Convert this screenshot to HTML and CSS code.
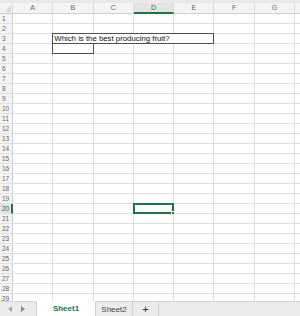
FILE: index.html
```html
<!DOCTYPE html>
<html lang="en">

<head>
    <meta charset="UTF-8">
    <title>Sheet1</title>
    <link rel="stylesheet" href="styles.css">
</head>

<body>
    <div class="topbar"></div>
    <div class="sheet">
        <!-- 列标题 -->
        <div class="colhead corner"><span class="corner-tri"></span></div>
        <div class="colhead">A</div>
        <div class="colhead">B</div>
        <div class="colhead">C</div>
        <div class="colhead active">D</div>
        <div class="colhead">E</div>
        <div class="colhead">F</div>
        <div class="colhead">G</div>
        <div class="colhead"></div>

        <div class="rowhead">1</div><div class="cell"></div><div class="cell"></div><div class="cell"></div><div class="cell"></div><div class="cell"></div><div class="cell"></div><div class="cell"></div><div class="cell"></div>
        <div class="rowhead">2</div><div class="cell"></div><div class="cell"></div><div class="cell"></div><div class="cell"></div><div class="cell"></div><div class="cell"></div><div class="cell"></div><div class="cell"></div>
        <div class="rowhead">3</div><div class="cell"></div><div class="cell question">Which is the best producing fruit?</div><div class="cell"></div><div class="cell"></div><div class="cell"></div>
        <div class="rowhead">4</div><div class="cell"></div><div class="cell answer"></div><div class="cell"></div><div class="cell"></div><div class="cell"></div><div class="cell"></div><div class="cell"></div><div class="cell"></div>
        <div class="rowhead">5</div><div class="cell"></div><div class="cell"></div><div class="cell"></div><div class="cell"></div><div class="cell"></div><div class="cell"></div><div class="cell"></div><div class="cell"></div>
        <div class="rowhead">6</div><div class="cell"></div><div class="cell"></div><div class="cell"></div><div class="cell"></div><div class="cell"></div><div class="cell"></div><div class="cell"></div><div class="cell"></div>
        <div class="rowhead">7</div><div class="cell"></div><div class="cell"></div><div class="cell"></div><div class="cell"></div><div class="cell"></div><div class="cell"></div><div class="cell"></div><div class="cell"></div>
        <div class="rowhead">8</div><div class="cell"></div><div class="cell"></div><div class="cell"></div><div class="cell"></div><div class="cell"></div><div class="cell"></div><div class="cell"></div><div class="cell"></div>
        <div class="rowhead">9</div><div class="cell"></div><div class="cell"></div><div class="cell"></div><div class="cell"></div><div class="cell"></div><div class="cell"></div><div class="cell"></div><div class="cell"></div>
        <div class="rowhead">10</div><div class="cell"></div><div class="cell"></div><div class="cell"></div><div class="cell"></div><div class="cell"></div><div class="cell"></div><div class="cell"></div><div class="cell"></div>
        <div class="rowhead">11</div><div class="cell"></div><div class="cell"></div><div class="cell"></div><div class="cell"></div><div class="cell"></div><div class="cell"></div><div class="cell"></div><div class="cell"></div>
        <div class="rowhead">12</div><div class="cell"></div><div class="cell"></div><div class="cell"></div><div class="cell"></div><div class="cell"></div><div class="cell"></div><div class="cell"></div><div class="cell"></div>
        <div class="rowhead">13</div><div class="cell"></div><div class="cell"></div><div class="cell"></div><div class="cell"></div><div class="cell"></div><div class="cell"></div><div class="cell"></div><div class="cell"></div>
        <div class="rowhead">14</div><div class="cell"></div><div class="cell"></div><div class="cell"></div><div class="cell"></div><div class="cell"></div><div class="cell"></div><div class="cell"></div><div class="cell"></div>
        <div class="rowhead">15</div><div class="cell"></div><div class="cell"></div><div class="cell"></div><div class="cell"></div><div class="cell"></div><div class="cell"></div><div class="cell"></div><div class="cell"></div>
        <div class="rowhead">16</div><div class="cell"></div><div class="cell"></div><div class="cell"></div><div class="cell"></div><div class="cell"></div><div class="cell"></div><div class="cell"></div><div class="cell"></div>
        <div class="rowhead">17</div><div class="cell"></div><div class="cell"></div><div class="cell"></div><div class="cell"></div><div class="cell"></div><div class="cell"></div><div class="cell"></div><div class="cell"></div>
        <div class="rowhead">18</div><div class="cell"></div><div class="cell"></div><div class="cell"></div><div class="cell"></div><div class="cell"></div><div class="cell"></div><div class="cell"></div><div class="cell"></div>
        <div class="rowhead">19</div><div class="cell"></div><div class="cell"></div><div class="cell"></div><div class="cell"></div><div class="cell"></div><div class="cell"></div><div class="cell"></div><div class="cell"></div>
        <div class="rowhead active">20</div><div class="cell"></div><div class="cell"></div><div class="cell"></div><div class="cell selected"><span class="handle"></span></div><div class="cell"></div><div class="cell"></div><div class="cell"></div><div class="cell"></div>
        <div class="rowhead">21</div><div class="cell"></div><div class="cell"></div><div class="cell"></div><div class="cell"></div><div class="cell"></div><div class="cell"></div><div class="cell"></div><div class="cell"></div>
        <div class="rowhead">22</div><div class="cell"></div><div class="cell"></div><div class="cell"></div><div class="cell"></div><div class="cell"></div><div class="cell"></div><div class="cell"></div><div class="cell"></div>
        <div class="rowhead">23</div><div class="cell"></div><div class="cell"></div><div class="cell"></div><div class="cell"></div><div class="cell"></div><div class="cell"></div><div class="cell"></div><div class="cell"></div>
        <div class="rowhead">24</div><div class="cell"></div><div class="cell"></div><div class="cell"></div><div class="cell"></div><div class="cell"></div><div class="cell"></div><div class="cell"></div><div class="cell"></div>
        <div class="rowhead">25</div><div class="cell"></div><div class="cell"></div><div class="cell"></div><div class="cell"></div><div class="cell"></div><div class="cell"></div><div class="cell"></div><div class="cell"></div>
        <div class="rowhead">26</div><div class="cell"></div><div class="cell"></div><div class="cell"></div><div class="cell"></div><div class="cell"></div><div class="cell"></div><div class="cell"></div><div class="cell"></div>
        <div class="rowhead">27</div><div class="cell"></div><div class="cell"></div><div class="cell"></div><div class="cell"></div><div class="cell"></div><div class="cell"></div><div class="cell"></div><div class="cell"></div>
        <div class="rowhead">28</div><div class="cell"></div><div class="cell"></div><div class="cell"></div><div class="cell"></div><div class="cell"></div><div class="cell"></div><div class="cell"></div><div class="cell"></div>
        <div class="rowhead">29</div><div class="cell"></div><div class="cell"></div><div class="cell"></div><div class="cell"></div><div class="cell"></div><div class="cell"></div><div class="cell"></div><div class="cell"></div>
    </div>

    <!-- 底部工作表标签 -->
    <div class="tabbar">
        <div class="nav">
            <span class="arrow left"></span>
            <span class="arrow right"></span>
        </div>
        <div class="tab current">Sheet1</div>
        <div class="tab">Sheet2</div>
        <div class="tab add">+</div>
        <div class="rest"></div>
    </div>
</body>

</html>
```

FILE: styles.css
```css
body {
    margin: 0;
    width: 300px;
    height: 316px;
    overflow: hidden;
    font-family: "Liberation Sans", Arial, sans-serif;
    background: #ffffff;
    display: flex;
    flex-direction: column;
}

.topbar {
    height: 3px;
    background: #e9e9e9;
    flex: none;
}

/* 表格主体用 grid 排列 */
.sheet {
    flex: 1;
    overflow: hidden;
    display: grid;
    grid-template-columns: 13px repeat(8, 40.3px);
    grid-template-rows: 11px;
    grid-auto-rows: 10px;
}

.colhead {
    background: #f4f4f4;
    border-right: 1px solid #dcdcdc;
    border-bottom: 1px solid #cfcfcf;
    color: #666666;
    font-size: 7px;
    line-height: 10px;
    text-align: center;
}

.colhead.active {
    background: #e4e4e4;
    color: #217346;
    border-bottom: 2px solid #217346;
    line-height: 9px;
}

.corner {
    position: relative;
}

.corner-tri {
    position: absolute;
    right: 1px;
    bottom: 1px;
    width: 0;
    height: 0;
    border-left: 6px solid transparent;
    border-bottom: 7px solid #d6d6d6;
}

.rowhead {
    background: #f4f4f4;
    border-right: 1px solid #cfcfcf;
    border-bottom: 1px solid #e2e2e2;
    color: #666666;
    font-size: 6.5px;
    line-height: 9px;
    padding-left: 2px;
}

.rowhead.active {
    color: #217346;
    border-right: 2px solid #217346;
    background: #e4e4e4;
}

.cell {
    border-right: 1px solid #dedede;
    border-bottom: 1px solid #dedede;
    box-sizing: border-box;
}

.question {
    grid-column: span 4;
    border: 1px solid #505050;
    margin: -1px 0 0 -1px;
    font-size: 7.8px;
    line-height: 9px;
    color: #111111;
    padding-left: 1px;
    white-space: nowrap;
}

.answer {
    border: 1px solid #505050;
    border-top: none;
    margin-left: -1px;
}

.selected {
    border: 2px solid #217346;
    margin: -1px 0 0 -1px;
    position: relative;
}

.handle {
    position: absolute;
    right: -3px;
    bottom: -3px;
    width: 4px;
    height: 4px;
    background: #217346;
    border: 1px solid #ffffff;
    box-sizing: border-box;
}

/* 底部标签栏 */
.tabbar {
    height: 15px;
    flex: none;
    display: flex;
    background: #ececec;
    border-top: 1px solid #d4d4d4;
    box-sizing: border-box;
    font-size: 8px;
}

.nav {
    width: 36px;
    display: flex;
    align-items: center;
    gap: 9px;
    padding-left: 8px;
    box-sizing: border-box;
}

.arrow {
    width: 0;
    height: 0;
    border-top: 3px solid transparent;
    border-bottom: 3px solid transparent;
}

.arrow.left {
    border-right: 4px solid #a8a8a8;
}

.arrow.right {
    border-left: 4px solid #8a8a8a;
}

.tab {
    display: flex;
    align-items: center;
    justify-content: center;
    border-right: 1px solid #cfcfcf;
    color: #444444;
}

.tab.current {
    width: 60px;
    background: #ffffff;
    margin-top: -1px;
    border-left: 1px solid #d4d4d4;
    color: #217346;
    font-weight: bold;
    box-sizing: border-box;
}

.tab:nth-child(3) {
    width: 36px;
}

.tab.add {
    width: 25px;
    font-size: 11px;
    color: #333333;
}
```
